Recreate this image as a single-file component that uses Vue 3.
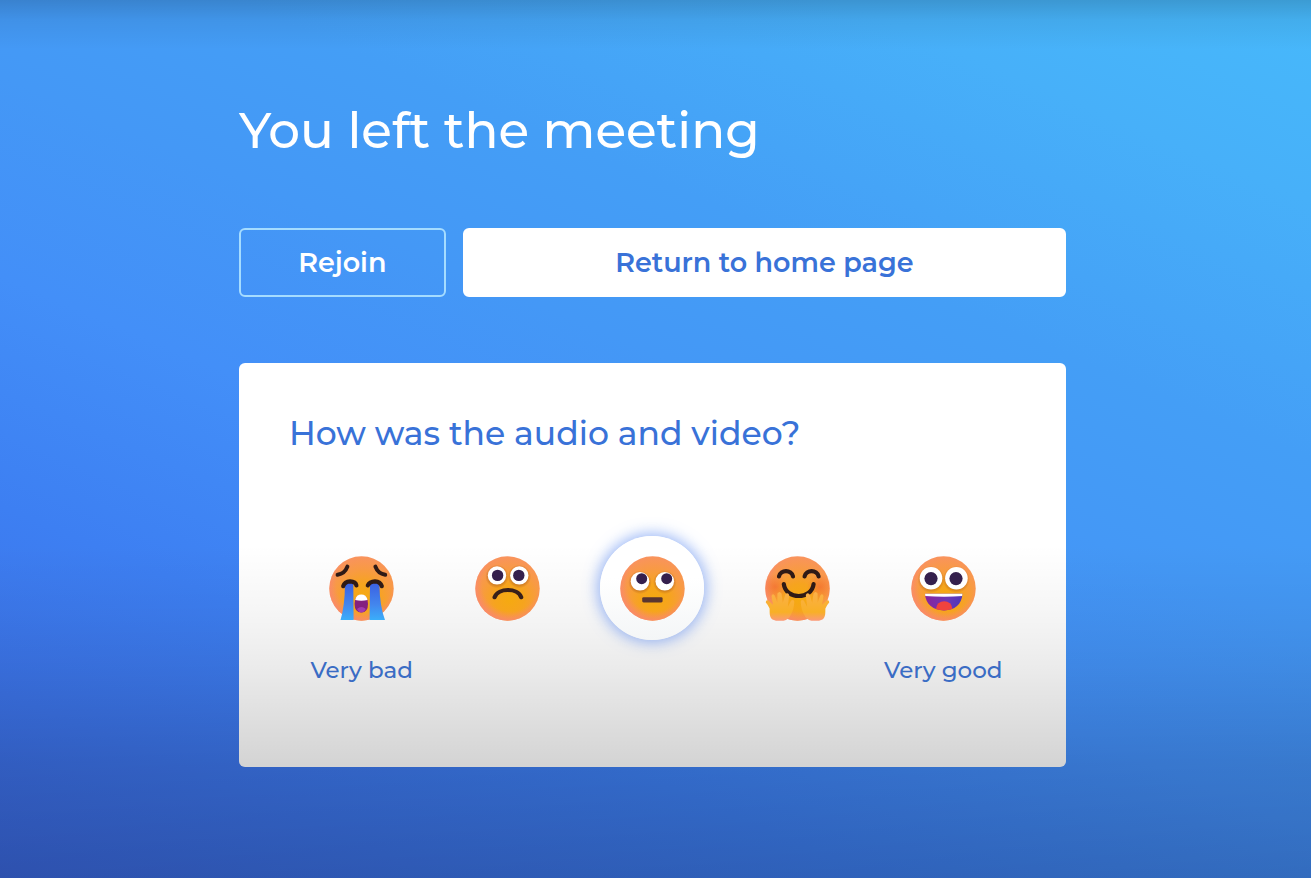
<script setup>
import { ref } from 'vue'

const rating = ref('neutral')
const options = [
  { id: 'crying', name: 'Very bad', caption: 'Very bad' },
  { id: 'sad', name: 'Bad', caption: '' },
  { id: 'neutral', name: 'Neutral', caption: '' },
  { id: 'hugging', name: 'Good', caption: '' },
  { id: 'grinning', name: 'Very good', caption: 'Very good' },
]
</script>

<template>
  <div class="page">
    <svg class="defs" width="0" height="0" aria-hidden="true">
      <defs>
        <radialGradient id="skin" cx="0.53" cy="0.66" r="0.66">
          <stop offset="0" stop-color="#f5aa10" />
          <stop offset="0.35" stop-color="#f6a41e" />
          <stop offset="0.7" stop-color="#f89a44" />
          <stop offset="1" stop-color="#f9935e" />
        </radialGradient>
        <radialGradient id="rim" cx="0.54" cy="0.42" r="0.62">
          <stop offset="0.7" stop-color="#fa8478" stop-opacity="0" />
          <stop offset="1" stop-color="#fa8478" stop-opacity="0.95" />
        </radialGradient>
        <linearGradient id="tear" x1="0" y1="0" x2="0" y2="1">
          <stop offset="0" stop-color="#3b5fe2" />
          <stop offset="0.6" stop-color="#4387ee" />
          <stop offset="1" stop-color="#3aaefa" />
        </linearGradient>
        <linearGradient id="mouth" x1="0" y1="0" x2="1" y2="0">
          <stop offset="0" stop-color="#8c229a" />
          <stop offset="0.6" stop-color="#6a38b8" />
          <stop offset="1" stop-color="#4a35b8" />
        </linearGradient>
        <linearGradient id="hand" x1="0" y1="0" x2="0" y2="1">
          <stop offset="0" stop-color="#fbb04a" />
          <stop offset="0.7" stop-color="#f8b026" />
          <stop offset="1" stop-color="#fb9a78" />
        </linearGradient>
        <radialGradient id="blush">
          <stop offset="0" stop-color="#f2612f" stop-opacity="0.6" />
          <stop offset="1" stop-color="#f2612f" stop-opacity="0" />
        </radialGradient>
        <radialGradient id="socket">
          <stop offset="0.7" stop-color="#b5651d" stop-opacity="0.6" />
          <stop offset="1" stop-color="#b5651d" stop-opacity="0" />
        </radialGradient>
        <clipPath id="grin">
          <path d="M14 37.8H51.4C51 48.5 43.5 54.4 33 54.4C22.5 54.4 14.4 48.5 14 37.8Z" />
        </clipPath>
      </defs>
    </svg>

    <main class="content">
      <h1 class="title">You left the meeting</h1>

      <div class="actions">
        <button type="button" class="button outline">Rejoin</button>
        <button type="button" class="button solid">Return to home page</button>
      </div>

      <section class="card">
        <h2 id="question" class="question">How was the audio and video?</h2>
        <div class="ratings" role="radiogroup" aria-labelledby="question">
          <label v-for="option in options" :key="option.id" class="option">
            <input
              v-model="rating"
              class="choice"
              type="radio"
              name="rating"
              :value="option.id"
              :aria-label="option.name"
            />
            <svg class="face" viewBox="0 0 65 65" aria-hidden="true">
              <circle cx="32.5" cy="32.5" r="32.2" fill="url(#skin)" />
              <circle cx="32.5" cy="32.5" r="32.2" fill="url(#rim)" />

              <template v-if="option.id === 'crying'">
                <g fill="none" stroke="#2f1a16" stroke-linecap="round">
                  <path d="M8.6 18.8Q15.8 17.6 18.4 10.6" stroke-width="4" />
                  <path d="M46.4 10.6Q49 17.6 56.2 18.8" stroke-width="4" />
                </g>
                <path d="M16 28Q20 25 24.3 28L24.6 64H11.5Q15.8 50 16 28Z" fill="url(#tear)" />
                <path d="M41 28Q45.5 25 50.4 28Q50.7 50 56 64H40.6Z" fill="url(#tear)" />
                <g fill="none" stroke="#2f1a16" stroke-linecap="round" stroke-width="4.2">
                  <path d="M14.2 30.2Q15.6 25.6 21 25.4Q26.6 25.6 27.4 29.4" />
                  <path d="M38.8 29.4Q40.6 25.6 46 25.4Q51.4 25.6 52.8 30.2" />
                </g>
                <path d="M25.6 48Q25.6 39 32.3 39Q39 39 39 48Q39 56.5 32.3 56.5Q25.6 56.5 25.6 48Z" fill="#84207f" />
                <path d="M26.2 44Q27.4 38.6 32.3 38.6Q37.2 38.6 38.6 44Q32.3 45.6 26.2 44Z" fill="#fff" />
                <path d="M28 53Q32.3 49 36.8 53Q35 56.5 32.3 56.5Q29.6 56.5 28 53Z" fill="#a23bb0" />
              </template>

              <template v-else-if="option.id === 'sad'">
                <circle cx="22" cy="20.5" r="11.8" fill="url(#socket)" />
                <circle cx="44.3" cy="20.5" r="11.8" fill="url(#socket)" />
                <circle cx="22" cy="19.4" r="9.2" fill="#fff" />
                <circle cx="44.3" cy="19.4" r="9.2" fill="#fff" />
                <circle cx="22.6" cy="19.4" r="5.7" fill="#35204d" />
                <circle cx="43.8" cy="19.4" r="5.7" fill="#35204d" />
                <path d="M19.6 41.2C23.4 31.6 42.6 31.6 46.2 41.2" fill="none" stroke="#38201a" stroke-width="4.2" stroke-linecap="round" />
              </template>

              <template v-else-if="option.id === 'neutral'">
                <circle cx="20" cy="26.3" r="11.8" fill="url(#socket)" />
                <circle cx="44.8" cy="26.3" r="11.8" fill="url(#socket)" />
                <circle cx="20" cy="25.3" r="9.3" fill="#fff" />
                <circle cx="44.8" cy="25.3" r="9.3" fill="#fff" />
                <circle cx="21.7" cy="22.7" r="5.5" fill="#35204d" />
                <circle cx="46.7" cy="22.7" r="5.5" fill="#35204d" />
                <rect x="22.2" y="41.2" width="20.4" height="5.2" rx="1.4" fill="#593630" />
              </template>

              <template v-else-if="option.id === 'hugging'">
                <circle cx="10" cy="31" r="13" fill="url(#blush)" />
                <circle cx="55" cy="31" r="13" fill="url(#blush)" />
                <g fill="none" stroke="#2f1a16" stroke-linecap="round" stroke-width="4.2">
                  <path d="M14 20.4C15.4 13.4 26.6 13.4 28 20.4" />
                  <path d="M39.6 20.4C41 13.4 52.2 13.4 53.6 20.4" />
                  <path d="M18.8 28C20.6 44 46.8 44 48.6 28" />
                </g>
                <g fill="url(#hand)">
                  <path d="M7.5 63.5C4 61 4.8 56 4.6 52.5Q3 49 .8 46.6Q.6 43.6 3.4 44.4L8 48.8L6.5 40Q7.5 36.6 9.7 39.5L12.4 46.8V37.5Q14.5 34.4 16.5 37.5L17.8 46.8L20.4 38.3Q23 35.8 24.2 39L22.8 51L26.2 44.5Q29 42.8 29.3 46Q28.7 53.7 26.2 58Q23.7 63.8 18.6 64.7H11Z" />
                  <path d="M57.5 63.5C61 61 60.2 56 60.4 52.5Q62 49 64.2 46.6Q64.4 43.6 61.6 44.4L57 48.8L58.5 40Q57.5 36.6 55.3 39.5L52.6 46.8V37.5Q50.5 34.4 48.5 37.5L47.2 46.8L44.6 38.3Q42 35.8 40.8 39L42.2 51L38.8 44.5Q36 42.8 35.7 46Q36.3 53.7 38.8 58Q41.3 63.8 46.4 64.7H54Z" />
                </g>
              </template>

              <template v-else>
                <circle cx="20" cy="23.5" r="13.6" fill="url(#socket)" />
                <circle cx="45.2" cy="23.5" r="13.6" fill="url(#socket)" />
                <circle cx="20" cy="22.2" r="11.3" fill="#fff" />
                <circle cx="45.4" cy="22.2" r="11.3" fill="#fff" />
                <circle cx="20" cy="22.6" r="6.6" fill="#35204d" />
                <circle cx="45" cy="22.6" r="6.6" fill="#35204d" />
                <g clip-path="url(#grin)">
                  <rect x="13" y="37" width="40" height="18" fill="url(#mouth)" />
                  <ellipse cx="33.2" cy="52" rx="8" ry="6.8" fill="#f0433d" />
                  <path d="M13 37H53V40Q33 41.5 13 40Z" fill="#fff" />
                </g>
              </template>
            </svg>
            <span v-if="option.caption" class="caption">{{ option.caption }}</span>
          </label>
        </div>
      </section>
    </main>
  </div>
</template>

<style>
body {
  margin: 0;
}
</style>

<style scoped>
.page {
  position: relative;
  box-sizing: border-box;
  min-height: 100vh;
  padding: 99px 24px 40px 18px;
  background: linear-gradient(203deg, #47b9fb 0%, #47b0f9 14%, #449ef6 32%, #4498f6 44%, #438ff8 58%, #3d7ff2 74%, #3b69e2 100%);
  font-family: Montserrat, Inter, "Liberation Sans", sans-serif;
  font-weight: 500;
}

.page::after {
  content: "";
  position: absolute;
  inset: 0;
  background:
    linear-gradient(to bottom, rgb(0 0 0 / 16%), rgb(0 0 0 / 6%) 20px, transparent 50px),
    linear-gradient(to bottom, transparent 62%, rgb(0 0 0 / 4%) 70%, rgb(0 0 0 / 8%) 76%, rgb(0 0 0 / 17%) 87%, rgb(0 0 0 / 23%) 100%);
  pointer-events: none;
}

.defs {
  position: absolute;
}

.content {
  max-width: 827px;
  margin: 0 auto;
}

.title {
  margin: 0 0 65px;
  color: #fff;
  font-size: 50px;
  font-weight: 500;
  line-height: 64px;
}

.actions {
  display: flex;
  gap: 17px;
  margin-bottom: 66px;
}

.button {
  box-sizing: border-box;
  padding: 18px 8px;
  border: 2px solid #fff;
  border-radius: 6px;
  font: inherit;
  font-size: 27px;
  font-weight: 600;
  line-height: 29px;
  cursor: pointer;
}

.outline {
  flex: 0 0 25%;
  border-color: #a5dcff;
  background: transparent;
  color: #fff;
}

.solid {
  flex: 1;
  background: #fff;
  color: #3972d8;
}

.card {
  padding: 50px 50px 82px;
  border-radius: 6px;
  background: #fff;
  color: #3972d8;
}

.question {
  margin: 0 0 83px;
  font-size: 33px;
  font-weight: 500;
  line-height: 40px;
}

.ratings {
  display: grid;
  grid-template-columns: repeat(5, 1fr);
}

.option {
  position: relative;
  z-index: 1;
  display: grid;
  grid-template-rows: 104px auto;
  row-gap: 15px;
  justify-items: center;
  cursor: pointer;
}

.choice {
  grid-area: 1 / 1;
  width: 104px;
  height: 104px;
  margin: 0;
  border-radius: 50%;
  appearance: none;
  cursor: pointer;
}

.choice:checked {
  background: linear-gradient(#fff 40%, #f4f6f7);
  box-shadow: 0 0 14px 3px rgb(82 132 240 / 55%);
}

.face {
  grid-area: 1 / 1;
  align-self: center;
  width: 65px;
  height: 65px;
  pointer-events: none;
}

.caption {
  color: #3a6cc4;
  font-size: 23px;
  line-height: 30px;
  white-space: nowrap;
}
</style>
